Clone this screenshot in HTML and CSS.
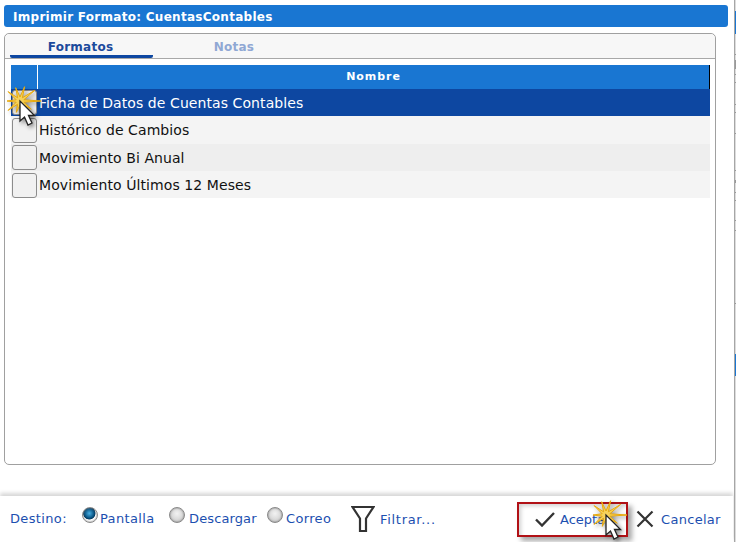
FILE: index.html
```html
<!DOCTYPE html>
<html lang="es">
<head>
<meta charset="utf-8">
<title>Imprimir Formato</title>
<link rel="stylesheet" href="styles.css">
</head>
<body>
<svg width="0" height="0" class="defs"><defs><g id="click"><polygon class="star" points="21,0 3.800,1.200 11.300,8.200 2.400,3.200 4.900,15.200 0,4 -3.700,11.400 -2.400,3.200 -11.900,9.400 -3.800,1.200 -13,0 -3.800,-1.200 -11.900,-9.400 -2.400,-3.200 -4.300,-13.300 0,-4 4.600,-14.300 2.400,-3.200 14.600,-10.600 3.800,-1.200"/><path class="arrow" d="M0 0V20l4.500-4 3.500 8 4-2-3.500-7.500h6Z"/></g></defs></svg>
<div class="dialog">
  <header class="title">Imprimir Formato: CuentasContables</header>
  <section class="panel">
    <nav class="tabs">
      <span class="tab active">Formatos</span>
      <span class="tab second-tab">Notas</span>
    </nav>
    <div class="grid">
      <div class="row head"><span class="cell-check"></span><span class="cell-name">Nombre</span></div>
      <div class="row selected"><span class="cell-check"><span class="box"></span></span><span class="cell-name">Ficha de Datos de Cuentas Contables</span></div>
      <div class="row odd"><span class="cell-check"><span class="box"></span></span><span class="cell-name">Histórico de Cambios</span></div>
      <div class="row even"><span class="cell-check"><span class="box"></span></span><span class="cell-name">Movimiento Bi Anual</span></div>
      <div class="row odd"><span class="cell-check"><span class="box"></span></span><span class="cell-name">Movimiento Últimos 12 Meses</span></div>
    </div>
  </section>
  <footer class="footer">
    <span class="label">Destino:</span>
    <span class="radio-item first"><span class="radio on"></span>Pantalla</span>
    <span class="radio-item second"><span class="radio"></span>Descargar</span>
    <span class="radio-item third"><span class="radio"></span>Correo</span>
    <button class="btn filter"><svg width="24" height="28" viewBox="0 0 24 28"><path d="M1.500 2h21L15 13.500V26H9V13.500Z" fill="none" stroke="#333" stroke-width="2.200"/></svg>Filtrar...</button>
    <button class="btn accept"><svg width="20" height="16" viewBox="0 0 20 16"><path d="M1 8.500l6 6L19 2" fill="none" stroke="#333" stroke-width="2.400"/></svg>Aceptar</button>
    <button class="btn cancel"><svg width="18" height="18" viewBox="0 0 18 18"><path d="M1.500 1.500l15 15M16.500 1.500l-15 15" fill="none" stroke="#333" stroke-width="2.200"/></svg>Cancelar</button>
  </footer>
</div>
<aside class="edge">
  <svg width="2" height="542" viewBox="0 0 2 542">
    <rect x="0" y="0" width="1" height="542" fill="#a6a6a6"/>
    <rect x="1" y="0" width="1" height="542" fill="#dcdcdc"/>
    <rect x="1" y="11" width="1" height="23" fill="#1976d2"/>
    <rect x="1" y="354" width="1" height="22" fill="#1976d2"/>
    <g fill="#999">
      <rect x="1" y="54" width="1" height="1"/><rect x="1" y="60" width="1" height="9"/><rect x="1" y="74" width="1" height="1"/><rect x="1" y="82" width="1" height="1"/><rect x="1" y="104" width="1" height="1"/><rect x="1" y="112" width="1" height="1"/><rect x="1" y="133" width="1" height="1"/><rect x="1" y="170" width="1" height="1"/><rect x="1" y="180" width="1" height="3"/><rect x="1" y="192" width="1" height="1"/><rect x="1" y="200" width="1" height="1"/><rect x="1" y="220" width="1" height="1"/><rect x="1" y="230" width="1" height="1"/><rect x="1" y="303" width="1" height="1"/>
    </g>
  </svg>
</aside>
<svg class="cursor c1" width="50" height="50" viewBox="-20 -20 50 50"><use href="#click"/></svg>
<svg class="cursor c2" width="50" height="50" viewBox="-20 -20 50 50"><use href="#click"/></svg>
</body>
</html>
```
FILE: styles.css
```css
* { box-sizing: border-box; }
html, body { margin: 0; padding: 0; }
body { width: 736px; height: 542px; overflow: hidden; background: #fff; font-family: "DejaVu Sans", Verdana, sans-serif; position: relative; display: flex; }
.defs { position: absolute; }
.dialog { width: 734px; height: 542px; flex: none; display: flex; flex-direction: column; padding-top: 5px; }
.edge { width: 2px; height: 542px; flex: none; }
.edge svg { display: block; }
.title { height: 22px; margin: 0 6px 0 4px; background: #1976d2; border-radius: 3px; color: #fff; font-size: 12px; font-weight: bold; line-height: 24px; letter-spacing: .28px; padding-left: 9px; }
.panel { width: 712px; height: 432px; margin: 6px 0 0 4px; border: 1px solid #a0a0a0; border-radius: 5px; }
.tabs { height: 25px; background: #f7f7f7; border-bottom: 1px solid #a8a8a8; border-radius: 5px 5px 0 0; display: flex; padding-left: 5px; }
.tab { width: 143px; height: 24px; text-align: center; font-size: 12px; font-weight: bold; line-height: 27px; letter-spacing: .25px; color: #90a8d4; }
.second-tab { padding-left: 19px; }
.tab.active { color: #1c4a9c; border-bottom: 3px solid #0d47a1; border-radius: 0 0 2px 2px; padding-right: 2px; }
.grid { margin: 6px 0 0 6px; width: 699px; }
.row { display: flex; font-size: 14px; color: #111; letter-spacing: .08px; }
.cell-check { width: 27px; flex: none; position: relative; }
.cell-name { flex: 1; padding: 1px 0 0 1px; }
.head { height: 24px; background: #1976d2; color: #fff; font-size: 11px; font-weight: bold; line-height: 24px; letter-spacing: .95px; border-right: 1px solid #000; }
.head .cell-check { border-right: 1px solid #fff; }
.head .cell-name { text-align: center; padding: 0; }
.selected { height: 27px; background: #0d47a1; color: #fff; line-height: 27px; }
.odd { height: 28px; background: #f4f4f4; line-height: 27px; }
.even { height: 27px; background: #eee; line-height: 27px; }
.odd:last-child { height: 27px; }
.box { position: absolute; left: 1px; top: 1px; width: 25px; height: 25px; background: #f1f1f1; border: 1px solid #8c8c8c; border-radius: 3px; }
.odd .box { top: 2px; }
.footer { width: 733px; height: 46px; margin-top: 31px; padding-bottom: 2px; flex: none; background: #fff; box-shadow: 0 -3px 4px rgba(0,0,0,.16); display: flex; align-items: center; font-size: 13px; color: #1c4fb0; letter-spacing: .35px; }
.label { margin-left: 10px; width: 72px; }
.radio-item { display: flex; align-items: center; }
.first { width: 87px; }
.second { width: 98px; letter-spacing: .12px; }
.third { width: 84px; }
.radio { width: 16px; height: 16px; border-radius: 50%; border: 1px solid #888; background: radial-gradient(circle at 50% 40%, #f2f2f2, #c4c4c4); margin-right: 3px; position: relative; top: -3px; box-shadow: inset 0 0 2px #777; }
.first .radio { margin-right: 2px; }
.second .radio { margin-right: 4px; }
.radio.on { background: radial-gradient(circle at 45% 38%, #49b0e4 0, #06507f 42%, #04395e 50%, #fff 56%); }
.btn { font: inherit; color: inherit; letter-spacing: .3px; background: none; border: 0; padding: 0; margin-top: 2px; display: flex; align-items: center; }
.filter { gap: 5px; width: 166px; letter-spacing: .7px; }
.accept { width: 111px; height: 35px; gap: 5px; padding-left: 16px; border: 2px solid #b11116; white-space: nowrap; letter-spacing: 0; box-shadow: 4px 4px 5px rgba(0,0,0,.35), inset 4px 4px 4px -2px rgba(0,0,0,.18); }
.cancel { margin-left: 8px; gap: 7px; }
.cursor { position: absolute; filter: drop-shadow(2px 2px 2px rgba(0,0,0,.45)); }
.c1 { left: 0; top: 81px; }
.c2 { left: 586px; top: 495px; }
.star { fill: #f6d25c; stroke: #e8a90c; stroke-width: 1; stroke-linejoin: round; }
.arrow { fill: #fff; stroke: #222; stroke-width: 1.300; }
```
